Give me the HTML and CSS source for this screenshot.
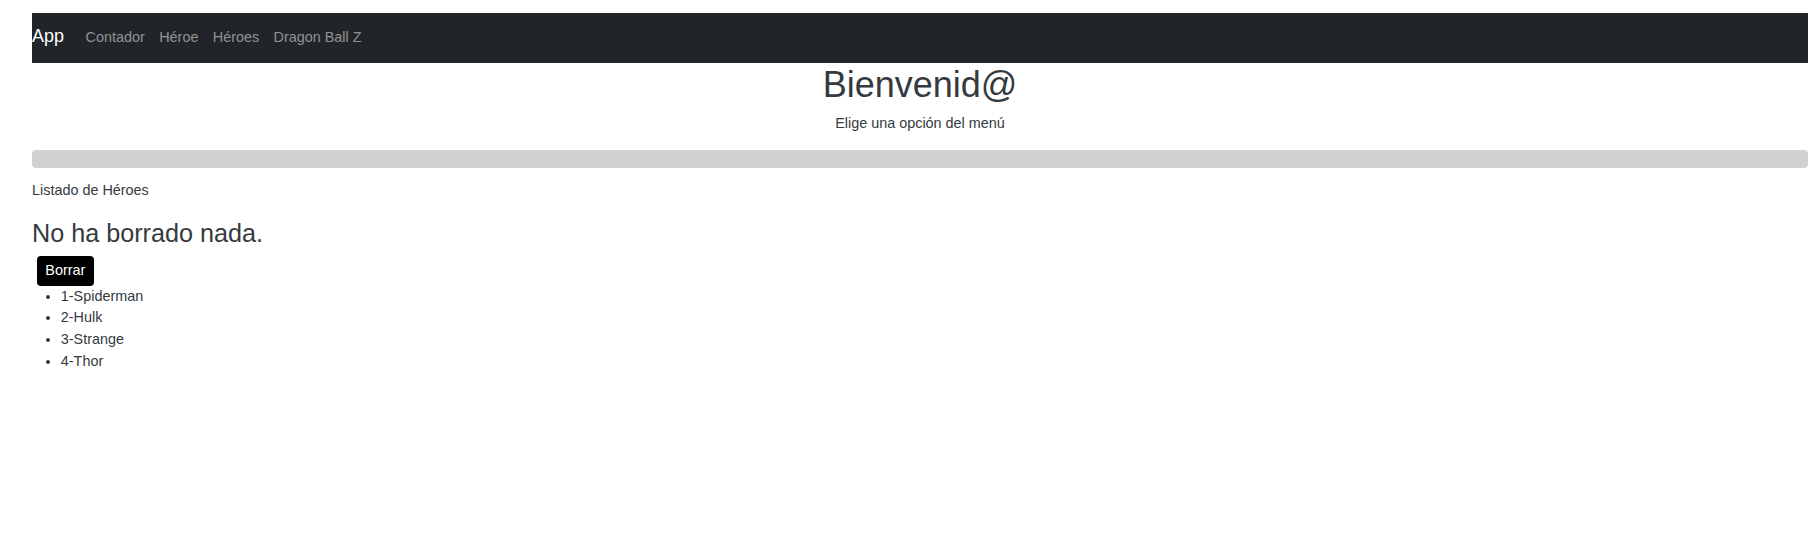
FILE: index.html
```html
<!DOCTYPE html>
<html lang="es">
<head>
<meta charset="utf-8">
<title>App</title>
<link rel="stylesheet" href="styles.css">
</head>
<body>
<div class="page">
  <nav class="navbar">
    <a class="brand" href="#">App</a>
    <ul class="nav">
      <li><a class="nav-link" href="#">Contador</a></li>
      <li><a class="nav-link" href="#">Héroe</a></li>
      <li><a class="nav-link" href="#">Héroes</a></li>
      <li><a class="nav-link" href="#">Dragon Ball Z</a></li>
    </ul>
  </nav>
  <header class="hero">
    <h1 class="title">Bienvenid@</h1>
    <p class="subtitle">Elige una opción del menú</p>
  </header>
  <div class="divider"></div>
  <section class="listing">
    <p class="caption">Listado de Héroes</p>
    <h3 class="status">No ha borrado nada.</h3>
    <button class="btn">Borrar</button>
    <ul class="heroes">
      <li>1-Spiderman</li>
      <li>2-Hulk</li>
      <li>3-Strange</li>
      <li>4-Thor</li>
    </ul>
  </section>
</div>
</body>
</html>
```
FILE: styles.css
```css
html, body {
  margin: 0;
  padding: 0;
  background: #ffffff;
}
body {
  font-family: "Liberation Sans", Arial, sans-serif;
  font-size: 14.4px;
  line-height: 21.6px;
  color: #343a40;
}
.page {
  padding: 13px 7px 0 32px;
}
.navbar {
  box-sizing: border-box;
  height: 50px;
  padding-top: 10px;
  background: #212529;
  display: flex;
  align-items: baseline;
}
.brand {
  font-size: 18px;
  line-height: 27px;
  color: #ffffff;
  text-decoration: none;
  margin-right: 14.4px;
}
.nav {
  list-style: none;
  margin: 0;
  padding: 0;
  display: flex;
  align-items: baseline;
}
.nav-link {
  display: block;
  padding: 0 7.2px;
  color: rgba(255, 255, 255, 0.5);
  text-decoration: none;
  font-size: 14.4px;
  line-height: 21.6px;
}
.hero {
  text-align: center;
}
.title {
  margin: 0 0 7.2px;
  font-size: 36px;
  line-height: 43.2px;
  font-weight: 400;
}
.subtitle {
  margin: 0;
}
.divider {
  margin-top: 15px;
  height: 18px;
  background: #d0d1d3;
  border-radius: 4px;
}
.caption {
  margin: 12.4px 0 0;
}
.status {
  margin: 16px 0 7.6px;
  font-size: 25.2px;
  line-height: 30.24px;
  font-weight: 400;
}
.btn {
  display: block;
  margin: 0 0 0 4.7px;
  padding: 4.2px 8.6px;
  border: 0;
  border-radius: 4px;
  background: #000000;
  color: #ffffff;
  font-family: inherit;
  font-size: 14.4px;
  line-height: 21.6px;
}
.heroes {
  margin: 0;
  padding-left: 28.8px;
  line-height: 21.6px;
}
```
